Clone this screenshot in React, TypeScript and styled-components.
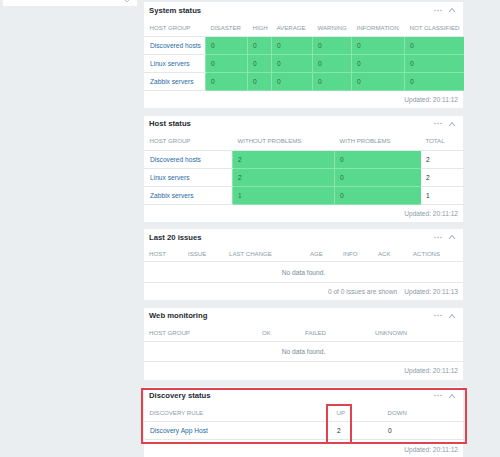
import { FC, ReactNode } from "react";
import styled, { createGlobalStyle } from "styled-components";

const GlobalStyle = createGlobalStyle`
  html, body {
    margin: 0;
    background: #ebeef0;
  }
  body {
    font-family: "Liberation Sans", Arial, sans-serif;
  }
`;

const Page = styled.div`
  display: flex;
  align-items: flex-start;
  gap: 7px;
  width: 500px;
  height: 457px;
  padding-left: 3px;
  box-sizing: border-box;
  overflow: hidden;
`;

const Sidebar = styled.div`
  position: relative;
  width: 134px;
  height: 6px;
  background: #fff;

  svg {
    position: absolute;
    left: 120px;
    top: -2px;
  }
`;

const Dashboard = styled.div`
  display: flex;
  flex-direction: column;
  gap: 7.5px;
  width: 319px;
  padding-top: 2px;
`;

const WidgetBox = styled.section`
  position: relative;
  background: #fff;
`;

const WidgetHead = styled.header<{ $h?: number }>`
  display: flex;
  align-items: center;
  height: ${(p) => p.$h ?? 16}px;
  padding: 0 7px 0 5px;
`;

const Title = styled.h4`
  flex: 1;
  margin: 0;
  font-size: 7.7px;
  font-weight: bold;
  color: #1f2c33;
`;

const HeadIcons = styled.div`
  display: flex;
  align-items: center;
  gap: 6px;
  color: #a3b1b8;
`;

const Grid = styled.table`
  width: 100%;
  border-collapse: collapse;
  table-layout: fixed;
  font-size: 6.65px;
`;

/* cell heights are given as the full row pitch; the collapsed border adds 1px */
const Th = styled.th<{ $h: number }>`
  height: ${(p) => p.$h - 1}px;
  padding: 0 5px;
  text-align: left;
  font-weight: normal;
  font-size: 6.1px;
  text-transform: uppercase;
  color: #8a9ba4;
  white-space: nowrap;
  border-bottom: 1px solid #e3e8eb;
`;

const Td = styled.td<{ $ok?: boolean; $h: number }>`
  height: ${(p) => p.$h - 1}px;
  padding: 0 5px;
  color: ${(p) => (p.$ok ? "#2b6a43" : "#1f2c33")};
  background: ${(p) => (p.$ok ? "#59d98d" : "transparent")};
  border-bottom: 1px solid ${(p) => (p.$ok ? "#8ae4ae" : "#e3e8eb")};
  border-left: 1px solid ${(p) => (p.$ok ? "#8ae4ae" : "transparent")};
  white-space: nowrap;
`;

const Empty = styled.td<{ $h: number }>`
  height: ${(p) => p.$h - 1}px;
  text-align: center;
  color: #768d99;
  border-bottom: 1px solid #e3e8eb;
`;

const Link = styled.a`
  color: #1f6aa5;
  text-decoration: none;
`;

const Footer = styled.footer<{ $h?: number }>`
  display: flex;
  justify-content: flex-end;
  align-items: center;
  gap: 7px;
  height: ${(p) => p.$h ?? 17}px;
  padding-right: 5px;
  font-size: 6.6px;
  color: #8a9ba4;
`;

const Highlight = styled.div<{ $x: number; $y: number; $w: number; $h: number }>`
  position: absolute;
  left: ${(p) => p.$x}px;
  top: ${(p) => p.$y}px;
  width: ${(p) => p.$w}px;
  height: ${(p) => p.$h}px;
  box-sizing: border-box;
  border: 2px solid #e0434f;
  pointer-events: none;
`;

const Dots = () => (
  <svg width="8" height="3" viewBox="0 0 8 3">
    <circle cx="1" cy="1.5" r="0.8" fill="currentColor" />
    <circle cx="4" cy="1.5" r="0.8" fill="currentColor" />
    <circle cx="7" cy="1.5" r="0.8" fill="currentColor" />
  </svg>
);

const Chevron = () => (
  <svg width="8" height="6" viewBox="0 0 8 6">
    <path d="M1 5 L4 1.5 L7 5" fill="none" stroke="currentColor" strokeWidth="1.1" />
  </svg>
);

const Widget: FC<{
  title: string;
  headH?: number;
  children: ReactNode;
}> = ({ title, headH, children }) => (
  <WidgetBox>
    <WidgetHead $h={headH}>
      <Title>{title}</Title>
      <HeadIcons>
        <Dots />
        <Chevron />
      </HeadIcons>
    </WidgetHead>
    {children}
  </WidgetBox>
);

type Row = { name: string; cells: { v: string; ok?: boolean }[] };

const DataTable: FC<{
  cols: number[];
  heads: string[];
  rows: Row[];
  headH?: number;
  rowH?: number;
}> = ({ cols, heads, rows, headH = 18, rowH = 18 }) => (
  <Grid>
    <colgroup>
      {cols.map((w, i) => (
        <col key={i} style={{ width: w }} />
      ))}
    </colgroup>
    <thead>
      <tr>
        {heads.map((h) => (
          <Th key={h} $h={headH}>
            {h}
          </Th>
        ))}
      </tr>
    </thead>
    <tbody>
      {rows.map((r) => (
        <tr key={r.name}>
          <Td $h={rowH}>
            <Link href="#">{r.name}</Link>
          </Td>
          {r.cells.map((c, i) => (
            <Td key={i} $h={rowH} $ok={c.ok}>
              {c.v}
            </Td>
          ))}
        </tr>
      ))}
    </tbody>
  </Grid>
);

const EmptyTable: FC<{ cols: number[]; heads: string[]; headH?: number; rowH?: number }> = ({
  cols,
  heads,
  headH = 18,
  rowH = 18,
}) => (
  <Grid>
    <colgroup>
      {cols.map((w, i) => (
        <col key={i} style={{ width: w }} />
      ))}
    </colgroup>
    <thead>
      <tr>
        {heads.map((h) => (
          <Th key={h} $h={headH}>
            {h}
          </Th>
        ))}
      </tr>
    </thead>
    <tbody>
      <tr>
        <Empty colSpan={heads.length} $h={rowH}>
          No data found.
        </Empty>
      </tr>
    </tbody>
  </Grid>
);

const zeros = (n: number) => Array.from({ length: n }, () => ({ v: "0", ok: true }));

const systemRows: Row[] = ["Discovered hosts", "Linux servers", "Zabbix servers"].map((name) => ({
  name,
  cells: zeros(6),
}));

const hostRows: Row[] = [
  { name: "Discovered hosts", cells: [{ v: "2", ok: true }, { v: "0", ok: true }, { v: "2" }] },
  { name: "Linux servers", cells: [{ v: "2", ok: true }, { v: "0", ok: true }, { v: "2" }] },
  { name: "Zabbix servers", cells: [{ v: "1", ok: true }, { v: "0", ok: true }, { v: "1" }] },
];

export default function App() {
  return (
    <>
      <GlobalStyle />
      <Page>
        <Sidebar>
          <svg width="8" height="5" viewBox="0 0 8 5">
            <path d="M1 1 L4 4 L7 1" fill="none" stroke="#b6c0c6" strokeWidth="1" />
          </svg>
        </Sidebar>
        <Dashboard>
          <Widget title="System status">
            <DataTable
              cols={[61, 42, 24, 41, 39, 53, 59]}
              heads={["Host group", "Disaster", "High", "Average", "Warning", "Information", "Not classified"]}
              rows={systemRows}
              headH={19}
            />
            <Footer>Updated: 20:11:12</Footer>
          </Widget>

          <Widget title="Host status">
            <DataTable
              cols={[88, 102, 86, 43]}
              heads={["Host group", "Without problems", "With problems", "Total"]}
              rows={hostRows}
              headH={19}
            />
            <Footer>Updated: 20:11:12</Footer>
          </Widget>

          <Widget title="Last 20 issues">
            <EmptyTable
              cols={[39, 41, 81, 33, 35, 35, 55]}
              heads={["Host", "Issue", "Last change", "Age", "Info", "Ack", "Actions"]}
              headH={17}
              rowH={19}
            />
            <Footer>
              <span>0 of 0 issues are shown</span>
              <span>Updated: 20:11:13</span>
            </Footer>
          </Widget>

          <Widget title="Web monitoring">
            <EmptyTable cols={[113, 43, 70, 93]} heads={["Host group", "Ok", "Failed", "Unknown"]} />
            <Footer $h={18}>Updated: 20:11:12</Footer>
          </Widget>

          <Widget title="Discovery status" headH={17}>
            <DataTable
              cols={[187, 51, 81]}
              heads={["Discovery rule", "Up", "Down"]}
              rows={[{ name: "Discovery App Host", cells: [{ v: "2" }, { v: "0" }] }]}
            />
            <Footer $h={18}>Updated: 20:11:12</Footer>
            <Highlight $x={-3} $y={1} $w={326} $h={56} />
            <Highlight $x={182} $y={17} $w={26} $h={40} />
          </Widget>
        </Dashboard>
      </Page>
    </>
  );
}
